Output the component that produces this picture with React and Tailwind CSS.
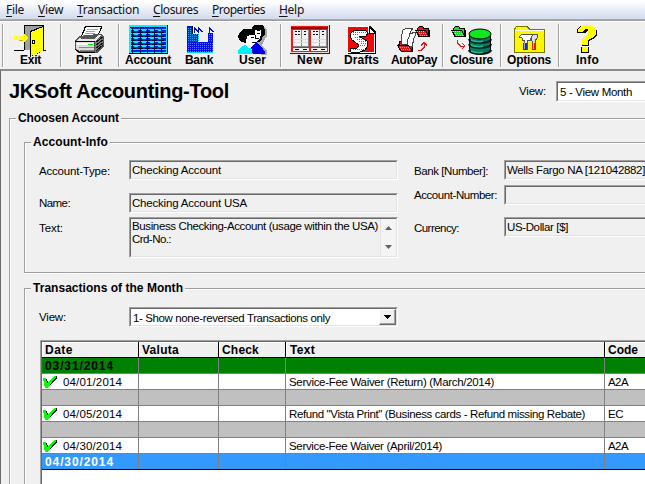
import React, { useLayoutEffect, useRef, useState } from "react";

// Single line of text whose letter spacing is adjusted to fill `w` pixels.
function Fit({ w, className = "", children }) {
  const ref = useRef(null);
  const [spacing, setSpacing] = useState(0);
  useLayoutEffect(() => {
    const natural = ref.current.getBoundingClientRect().width;
    setSpacing((w - natural) / ref.current.textContent.length);
  }, [w]);
  return (
    <span
      ref={ref}
      className={"inline-block shrink-0 self-start whitespace-pre leading-[14px] " + className}
      style={{ letterSpacing: spacing + "px" }}
    >
      {children}
    </span>
  );
}

const menus = [
  ["F", "ile", 18],
  ["V", "iew", 25],
  ["T", "ransaction", 62],
  ["C", "losures", 45],
  ["P", "roperties", 53],
  ["H", "elp", 25],
];

function MenuBar() {
  return (
    <div className="flex h-5 shrink-0 gap-[14px] border-b border-[#a7abb8] bg-linear-to-b from-white from-10% via-[#e9edf7] via-50% to-[#d3daed] pl-[6px] pt-[2px]">
      {menus.map(([a, b, w]) => (
        <Fit key={a + b} w={w} className="font-['Noto_Sans',sans-serif] text-[12px] leading-[16px]! text-[#111]">
          <span className="underline underline-offset-2">{a}</span>
          {b}
        </Fit>
      ))}
    </div>
  );
}

function Tool({ label, w, x, width, cell, offset, children }) {
  return (
    <div className={"flex shrink-0 flex-col " + cell}>
      <svg width={width} height="31" viewBox={`${x} 22 ${width} 31`} shapeRendering="crispEdges" className="block overflow-visible">
        {children}
      </svg>
      <Fit w={w} className={"relative text-[12px] font-bold " + offset}>
        {label}
      </Fit>
    </div>
  );
}

const Sep = () => <div className="mt-[2px] h-[43px] w-[2px] shrink-0 border-l border-r border-l-[#a0a0a0] border-r-white" />;

// Small open folder, 15x11, with a dithered front flap.
function Folder({ x, y, color }) {
  return (
    <g transform={`translate(${x} ${y})`}>
      <path d="M2 2h1V1h1V0h4v1h1v1h5v2h1v7H3V9H2z" fill="#000" />
      <path d="M3 2h1V1h4v2h5v6H3z" fill={color} />
      <path d="M0 4h11v1h1v2h1v2h1v2H3V9H2V7H1V5H0z" fill="#000" />
      <path d="M1 5h10v2h1v2h1v1H4V8H3V6H1z" fill={color} />
      <path d="M2 5.500h8M4 7.500h8M5 9.500h8" stroke="#fff" strokeOpacity=".6" strokeDasharray="1 1" />
    </g>
  );
}

function ExitIcon() {
  return (
    <>
      <path d="M24 25h20v25H24z" fill="#000" />
      <path d="M25 26h18v24H25z" fill="#a0a0a0" />
      <path d="M14 50.500h10M40 50.500h6" stroke="#000" />
      <path d="M24 42v8h6V31z" fill="#a0a0a0" />
      <path d="M24.500 26v24" stroke="#000" />
      <path d="M30 31l13-5v25l-13 6z" fill="#000" />
      <path d="M31 32l12-5v24l-12 5z" fill="#ff0" />
      <path d="M32 40h3v4h-3z" fill="#000" />
      <path d="M33 41h1v2h-1z" fill="#fff" />
      <path d="M14 36h1v4h-1zM16 36h2v4h-2zM19 36h4v-3l6 5-6 5v-3h-4z" fill="#ff0" />
      <path d="M19 40.500h4" stroke="#b8b800" />
    </>
  );
}

function PrintIcon() {
  return (
    <>
      <path d="M85 26h17v2l-5 11H80z" fill="#000" />
      <path d="M86 27h15l-5 12H81z" fill="#fff" />
      <path d="M87 29.500h11M86 31.500h9M85 33.500h10M83 35.500h11" stroke="#00e8e8" />
      <path d="M97 34h5l2 3v10l-7 6H79l-4-3V40l5-4z" fill="#555" />
      <path d="M80 37l-4 4h19l7-6h-4l-3 4H81z" fill="#e8e8e8" />
      <path d="M76 42h18v9H80l-4-2z" fill="#dcdcdc" />
      <path d="M77 43h16v2H77z" fill="#fff" />
      <path d="M79 47h15M80 50.500h14" stroke="#888" />
      <path d="M88 44.500h5" stroke="#0e0" />
      <path d="M95 41l8-5v9l-8 7z" fill="#777" />
      <path d="M96 42l7-5M96 45l7-5M96 48l7-5M96 51l7-6" stroke="#111" />
      <path d="M75 41.500h20M75 49.500l5 3h15" stroke="#000" fill="none" />
    </>
  );
}

function AccountIcon() {
  return (
    <>
      <path d="M129 25h39v29h-39z" fill="#000" />
      <path d="M129 25h38v28h-38z" fill="#00f0ff" />
      <path d="M131 27h35v2h-35z" fill="#0020f0" />
      {[30, 34, 38, 42, 46].map((y) => (
        <g key={y}>
          <path d={`M131 ${y}h35v3h-35z`} fill="#0020f0" />
          <path d={`M131 ${y + 2}.500h35`} stroke="#000" strokeDasharray="5 2" />
          <path d={`M134 ${y}.500h30`} stroke="#00f0ff" strokeDasharray="4 4" />
        </g>
      ))}
      <path d="M131 50h35v2h-35z" fill="#0020f0" />
      <path d="M130 27.500h36" stroke="#000" strokeDasharray="4 1" />
      <path d="M132.500 27v26M140.500 27v26M147.500 27v26M154.500 27v26M161.500 27v26" stroke="#001060" />
    </>
  );
}

function BankIcon() {
  return (
    <>
      <path d="M187 26h6v8h5v8h4v-8h11v19h-26z" fill="#000" />
      <path d="M187 26h5v9h5v7h6v-9h10v20h-26z" fill="#0010f0" />
      <path d="M201 33h7v9h-7z" fill="#efefef" />
      <path d="M194.500 33v-5l4 4v-4l4 4M209.500 33v-5l4 4" stroke="#0010c0" fill="none" />
      {[28, 30, 32, 34, 36, 38, 40].map((y) => (
        <path key={y} d={`M188 ${y}.500h${y < 34 ? 4 : 12}`} stroke="#00a8ff" strokeDasharray="1 1" />
      ))}
      {[34, 36, 38, 40].map((y) => (
        <path key={y} d={`M209 ${y}.500h4`} stroke="#00a8ff" strokeDasharray="1 1" />
      ))}
      {[43, 45, 47, 49, 51].map((y) => (
        <path key={y} d={`M188 ${y}.500h25`} stroke="#00a8ff" strokeDasharray="1 1" />
      ))}
      <path d="M187 52.500h26" stroke="#00d8ff" />
    </>
  );
}

function UserIcon() {
  return (
    <>
      <path d="M258 27h7l2 3v6l-3 5-2 4 5 6v4h-6l-8-12z" fill="#a8a8a8" />
      <path d="M252 29v-2l3-2h7l2 2 1 3v5l-3 2v2l-3 3h-6V29z" fill="#000" />
      <path d="M255 30l3 1 3-1v5l-2 5-4 3-2-2v-9z" fill="#fff" />
      <path d="M257 33.500h3M256 38.500h3" stroke="#000" />
      <path d="M251 44l5-2 3 3 3 2 3 5v2h-13z" fill="#0000e8" />
      <path d="M239 34l2-3 3-2h8l3 2v4h-6l-2 3v2l1 3h-3l-5-2-2-4z" fill="#000" />
      <path d="M247 36l3-1h5v3l1 2-1 4-3 2h-3l-3-3z" fill="#fff" />
      <path d="M251 37.500h3M252 42.500h3" stroke="#000" />
      <path d="M255.500 35v4" stroke="#000" />
      <path d="M238 54v-4l3-3 4-2h3l3 3 2 6z" fill="#00f0f8" />
      <path d="M244 44l5 4 3-1-4-4z" fill="#fff" />
    </>
  );
}

function NewIcon() {
  return (
    <>
      <path d="M290 25h40v29h-40z" fill="#222" />
      <path d="M290 25h39v28h-39z" fill="#f6dede" />
      <path d="M291 26h37v26h-37z" fill="#f01818" />
      <path d="M291 27h37v2h-37z" fill="#900000" />
      <path d="M293 30h16v16h-16zM311 30h16v16h-16zM293 48h16v3h-16zM311 48h16v3h-16z" fill="#f1f1f1" />
      <path d="M301.500 30v16M319.500 30v16M308.500 30v16M326.500 30v16M293 46.500h16M311 46.500h16" stroke="#888" />
      <path d="M295 31.500h5M304 31.500h3M313 31.500h5M322 31.500h3M295 34.500h5M304 34.500h3M313 34.500h5M322 34.500h3" stroke="#000" strokeDasharray="2 1" />
      <path d="M294 39.500h14M294 42.500h14M312 39.500h14M312 42.500h14" stroke="#ddd" />
      <path d="M295 49.500h4M303 49.500h4M313 49.500h4M321 49.500h4" stroke="#000" />
    </>
  );
}

function DraftsIcon() {
  return (
    <>
      <path d="M348 26h22l6 6v22h-28z" fill="#000" />
      <path d="M347 26h22v6h6v21h-28z" fill="#fff" />
      <path d="M348 27h20v6h6v19h-26z" fill="#f00808" />
      <path d="M369 26v7h6z" fill="#fff" stroke="#000" />
      <path d="M351 33l4-3h10l3 3-2 3h-7l8 5 1 5-3 4-5 2h-9l-1-3 7-1 2-3-7-5-2-4z" fill="#fff" stroke="#000" />
      <path d="M353 32.500h13M353 34.500h6M355 37.500h5M357 39.500h7M359 41.500h7M361 43.500h6M360 45.500h6M353 49.500h12" stroke="#d33" strokeDasharray="1 1" />
    </>
  );
}

function AutoPayIcon() {
  return (
    <>
      <path d="M399 41l3-1h3l2 2h6v9h-13l-2-4z" fill="#000" />
      <path d="M400 42l2-1h3l2 2h5v6h-12z" fill="#e01818" />
      <path d="M401 38l2-8 4-2h6l-3 5-2 12-6-1z" fill="#fff" stroke="#444" />
      <path d="M407 42l3-8 5-2 1 2-2 4-2 9-5-1z" fill="#fff" stroke="#444" />
      <path d="M397 45h12l4 7h-12z" fill="#000" />
      <path d="M398.500 46h10l3 5h-10z" fill="#e01818" />
      <path d="M400 47.500h9M401 49.500h9" stroke="#fff" strokeOpacity=".6" strokeDasharray="1 1" />
      <Folder x={415} y={26} color="#e01818" />
      <path d="M418 50.500h3l3-3v-4M421 45.500l3-3 3 3" stroke="#e01818" fill="none" />
    </>
  );
}

function ClosureIcon() {
  return (
    <>
      <Folder x={451} y={26} color="#18d828" />
      <path d="M457.500 40v3l3 3h4M462 43l3 3-3 3" stroke="#f01818" fill="none" />
      <g shapeRendering="auto">
        <path d="M469 34v15c0 7 22 7 22 0V34z" fill="#087860" />
        <path d="M469 50c0 5 22 5 22 0M469 39c0 5 22 5 22 0M469 44c0 5 22 5 22 0" stroke="#002018" strokeWidth="2" fill="none" />
        <path d="M469.500 34v15c0 7 21 7 21 0V34" stroke="#000" fill="none" />
        <path d="M471 40c4 2 10 2 12 1M471 45c4 2 10 2 12 1M471 51c4 2 10 2 12 1" stroke="#20b890" strokeWidth="1.500" fill="none" />
        <ellipse cx="480" cy="34" rx="11" ry="5" fill="#10e820" stroke="#000" />
      </g>
    </>
  );
}

function OptionsIcon() {
  return (
    <>
      <path d="M515 30l3-4h9l3 3h15v24h-30z" fill="#555" />
      <path d="M514 30l3-4h9l3 3h15v23h-30z" fill="#fff800" stroke="#777700" />
      <path d="M515 30.500h29" stroke="#fffff0" />
      <path d="M519 37l3-3h11v4h-3v2h-3v9h-3v-9h-2v-2z" fill="#fff" stroke="#555" />
      <path d="M533 34h4v4l-2 3v3h-3v-3l-1-3z" fill="#ddd" stroke="#555" />
      <path d="M523 43h4v7h-4z" fill="#1030b0" />
      <path d="M532 43h4v7h-4z" fill="#e02018" />
      <path d="M524.500 43v6M533.500 43v6" stroke="#fff" strokeOpacity=".6" />
    </>
  );
}

function InfoIcon() {
  return (
    <>
      <path d="M577 33v-4l4-3h10l6 4v5l-4 4-4 2v5h-7v-7l3-3 3-1v-5l-3 3h-5z" fill="#000" />
      <path d="M578 32v-3l4-4h9l5 4v5l-4 4-4 2v5h-6v-6l3-3 3-1v-6h-3l-2 3z" fill="#ff0" />
      <path d="M581 47h8v6h-8z" fill="#000" />
      <path d="M582 47h6v5h-6z" fill="#ff0" />
    </>
  );
}

function Toolbar() {
  return (
    <div className="flex h-[51px] shrink-0 border-b-2 border-t border-b-[#8a8a8a] border-t-[#a0a0a0] bg-[#f0f0f0]">
      <div className="flex flex-1 border-t border-white pl-[2px]">
        <Sep />
        <Tool label="Exit" w={21} x={4} width={56} cell="w-[56px]" offset="ml-[16px]"><ExitIcon /></Tool>
        <Sep />
        <Tool label="Print" w={26} x={62} width={56} cell="w-[56px]" offset="ml-[14px]"><PrintIcon /></Tool>
        <Sep />
        <Tool label="Account" w={46} x={120} width={56} cell="w-[56px]" offset="ml-[5px]"><AccountIcon /></Tool>
        <Tool label="Bank" w={28} x={176} width={50} cell="w-[50px]" offset="ml-[9px]"><BankIcon /></Tool>
        <Tool label="User" w={27} x={226} width={54} cell="w-[54px]" offset="ml-[13px]"><UserIcon /></Tool>
        <Sep />
        <Tool label="New" w={26} x={282} width={54} cell="w-[54px]" offset="ml-[15px]"><NewIcon /></Tool>
        <Tool label="Drafts" w={35} x={336} width={50} cell="w-[50px]" offset="ml-[8px]"><DraftsIcon /></Tool>
        <Tool label="AutoPay" w={46} x={386} width={56} cell="w-[56px]" offset="ml-[5px]"><AutoPayIcon /></Tool>
        <Sep />
        <Tool label="Closure" w={43} x={444} width={56} cell="w-[56px]" offset="ml-[6px]"><ClosureIcon /></Tool>
        <Sep />
        <Tool label="Options" w={44} x={502} width={56} cell="w-[56px]" offset="ml-[5px]"><OptionsIcon /></Tool>
        <Sep />
        <Tool label="Info" w={23} x={560} width={56} cell="w-[56px]" offset="ml-[16px]"><InfoIcon /></Tool>
      </div>
    </div>
  );
}

function GroupBox({ title, w, className = "", children }) {
  return (
    <section className={"flex shrink-0 flex-col " + className}>
      <div className="flex h-[14px] shrink-0">
        <div className="mt-[7px] w-[7px] shrink-0 border-l border-t border-[#a0a0a0] shadow-[inset_1px_1px_0_#fff]" />
        <Fit w={w} className="ml-[2px] mr-[2px] text-[12px] font-bold">{title}</Fit>
        <div className="mt-[7px] h-[2px] flex-1 border-b border-t border-b-white border-t-[#a0a0a0]" />
      </div>
      <div className="flex-1 border-l border-[#a0a0a0] shadow-[inset_1px_0_0_#fff]">{children}</div>
    </section>
  );
}

function Sunken({ className = "", children }) {
  return (
    <div className={"flex shrink-0 border border-b-white border-l-[#a0a0a0] border-r-white border-t-[#a0a0a0] " + className}>
      <div className="flex flex-1 border border-b-[#e3e3e3] border-l-[#696969] border-r-[#e3e3e3] border-t-[#696969]">{children}</div>
    </div>
  );
}

function Row({ label, lw, lc = "mt-[4px]", value, vw, vc = "mt-[1px]", className = "" }) {
  return (
    <div className={"flex h-5 " + className}>
      <div className="flex w-[90px] shrink-0">
        <Fit w={lw} className={lc}>{label}</Fit>
      </div>
      <Sunken className="w-[269px]">{value && <Fit w={vw} className={"ml-[1px] " + vc}>{value}</Fit>}</Sunken>
    </div>
  );
}

const Check = () => (
  <svg width="15" height="14" viewBox="0 0 15 14" shapeRendering="crispEdges" className="ml-px mt-px shrink-0">
    <path d="M1 4h3l1 4 8-7h1v2l-5 5-4 5H3L1 9z" fill="#000" />
    <path d="M0 3h3l1 5 7-7h2v1L9 7l-4 6H2L1 8z" fill="#0f0" />
  </svg>
);

const columns = [
  ["Date", 28, "w-[97px] pl-[3px]"],
  ["Valuta", 37, "w-[80px] pl-[3px]"],
  ["Check", 37, "w-[67px] pl-[3px]"],
  ["Text", 25, "w-[319px] pl-[4px]"],
  ["Code", 30, "w-[90px] pl-[3px]"],
];

const rows = [
  { bg: "bg-[#008000] font-bold", date: "03/31/2014", dw: 69 },
  { bg: "bg-white", check: true, date: "04/01/2014", dw: 59, text: "Service-Fee Waiver (Return) (March/2014)", tw: 205, code: "A2A", cw: 20 },
  { bg: "bg-[#c0c0c0]" },
  { bg: "bg-white", check: true, date: "04/05/2014", dw: 59, text: 'Refund "Vista Print" (Business cards - Refund missing Rebate)', tw: 296, code: "EC", cw: 15 },
  { bg: "bg-[#c0c0c0]" },
  { bg: "bg-white", check: true, date: "04/30/2014", dw: 59, text: "Service-Fee Waiver (April/2014)", tw: 153, code: "A2A", cw: 20 },
  { bg: "bg-[#3399ff] font-bold text-white", date: "04/30/2014", dw: 69, last: true },
];

function Ledger() {
  return (
    <div className="ml-[15px] mt-[13px] h-[150px] w-[700px] border-l border-t border-[#a0a0a0]">
      <div className="h-full border-l border-t border-[#696969] bg-white">
        <div className="flex h-4 border-b border-black bg-[#f0f0f0] text-[12px] font-bold">
          {columns.map(([name, w, cls]) => (
            <div key={name} className={"flex shrink-0 border-r border-black shadow-[inset_1px_1px_0_#fff] " + cls}>
              <Fit w={w} className="mt-[1px]">{name}</Fit>
            </div>
          ))}
        </div>
        {rows.map((r, i) => (
          <div key={i} className={"flex h-4 border-b " + (r.last ? "border-black " : "border-[#808080] ") + r.bg}>
            <div className="flex w-[97px] shrink-0 border-r border-[#808080]">
              {r.check && <Check />}
              {r.date && <Fit w={r.dw} className={r.check ? "ml-[5px] mt-[1px]" : "ml-[3px] mt-[1px] text-[12px]"}>{r.date}</Fit>}
            </div>
            <div className="w-[80px] shrink-0 border-r border-[#808080]" />
            <div className="w-[67px] shrink-0 border-r border-[#808080]" />
            <div className="flex w-[319px] shrink-0 border-r border-[#808080] pl-[3px]">
              {r.text && <Fit w={r.tw} className="mt-[1px]">{r.text}</Fit>}
            </div>
            <div className="flex w-[90px] shrink-0 pl-[3px]">{r.code && <Fit w={r.cw} className="mt-[1px]">{r.code}</Fit>}</div>
          </div>
        ))}
      </div>
    </div>
  );
}

export default function App() {
  return (
    <div className="flex h-[484px] w-[645px] flex-col overflow-hidden bg-[#f0f0f0] font-['Liberation_Sans',Arial,sans-serif] text-[11.5px] leading-[14px] text-black">
      <MenuBar />
      <Toolbar />
      <main className="flex min-h-0 flex-1 flex-col overflow-hidden border-l border-[#696969] pl-2">
        <div className="flex h-10 shrink-0">
          <h1 className="w-[510px] shrink-0">
            <Fit w={220} className="mt-[8px] text-[20px] font-bold leading-[24px]!">JKSoft Accounting-Tool</Fit>
          </h1>
          <div className="flex w-[37px] shrink-0">
            <Fit w={27} className="mt-[13px]">View:</Fit>
          </div>
          <Sunken className="mt-[10px] h-[21px] w-[120px] bg-white">
            <Fit w={72} className="ml-[2px] mt-[2px]">5 - View Month</Fit>
          </Sunken>
        </div>

        <GroupBox title="Choosen Account" w={101} className="w-[720px]">
          <GroupBox title="Account-Info" w={75} className="ml-[14px] mt-[10px] h-[137px]">
            <div className="flex pl-[14px] pt-[11px]">
              <div className="w-[375px] shrink-0">
                <Row label="Account-Type:" lw={71} value="Checking Account" vw={89} className="mb-[13px]" />
                <Row label="Name:" lw={31} lc="mt-[3px]" value="Checking Account USA" vw={115} className="mb-[4px]" />
                <div className="flex h-[41px]">
                  <div className="flex w-[90px]">
                    <Fit w={24} className="mt-[4px]">Text:</Fit>
                  </div>
                  <Sunken className="w-[269px]">
                    <div className="ml-[1px] mt-[1px] flex flex-1 flex-col">
                      <Fit w={246} className="leading-[13px]!">Business Checking-Account (usage within the USA)</Fit>
                      <Fit w={39} className="leading-[13px]!">Crd-No.:</Fit>
                    </div>
                    <div className="flex w-[16px] flex-col items-center justify-between border-l border-[#e3e3e3] bg-[#f4f4f4] py-[7px]">
                      <svg width="7" height="4" className="block"><path d="M0 4l3.500-4L7 4z" fill="#606060" /></svg>
                      <svg width="7" height="4" className="block"><path d="M0 0l3.500 4L7 0z" fill="#606060" /></svg>
                    </div>
                  </Sunken>
                </div>
              </div>
              <div className="shrink-0">
                <Row label="Bank [Number]:" lw={74} value="Wells Fargo NA [121042882]" vw={138} className="mb-[5px]" />
                <Row label="Account-Number:" lw={83} lc="mt-[3px]" className="mb-[12px]" />
                <Row label="Currency:" lw={45} value="US-Dollar [$]" vw={61} />
              </div>
            </div>
          </GroupBox>
          <div className="ml-[14px] h-[2px] border-b border-t border-b-white border-t-[#a0a0a0]" />

          <GroupBox title="Transactions of the Month" w={150} className="ml-[14px] mt-[7px] h-[240px]">
            <div className="mt-[12px] flex h-5 pl-[14px]">
              <div className="flex w-[90px] shrink-0">
                <Fit w={27} className="mt-[3px]">View:</Fit>
              </div>
              <Sunken className="w-[269px] bg-white">
                <Fit w={197} className="ml-[2px] mt-[2px]">1- Show none-reversed Transactions only</Fit>
                <div className="ml-auto flex w-[17px] items-center justify-center border border-b-[#696969] border-l-white border-r-[#696969] border-t-white bg-[#f0f0f0] shadow-[inset_-1px_-1px_0_#a0a0a0]">
                  <svg width="7" height="4" shapeRendering="crispEdges"><path d="M0 0h7v1H6v1H5v1H4v1H3V3H2V2H1V1H0z" /></svg>
                </div>
              </Sunken>
            </div>
            <Ledger />
          </GroupBox>
        </GroupBox>
      </main>
    </div>
  );
}
